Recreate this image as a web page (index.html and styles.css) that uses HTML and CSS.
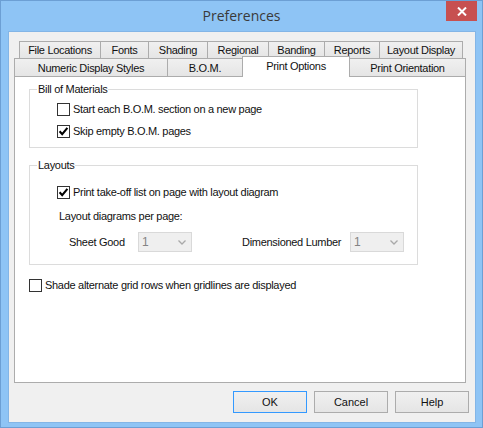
FILE: index.html
```html
<!DOCTYPE html>
<html>
<head>
<meta charset="utf-8">
<link rel="stylesheet" href="styles.css">
</head>
<body>
<div class="window">
  <div class="titlebar">
    <div class="title">Preferences</div>
    <div class="close">
      <svg width="10" height="9" viewBox="0 0 10 9"><path d="M1 0.5 L9 8.5 M9 0.5 L1 8.5" stroke="#fff" stroke-width="2" fill="none"/></svg>
    </div>
  </div>
  <div class="client">
    <div class="tabrow row1">
      <div class="tab w-files">File Locations</div>
      <div class="tab w-fonts">Fonts</div>
      <div class="tab w-shading">Shading</div>
      <div class="tab w-regional">Regional</div>
      <div class="tab w-banding">Banding</div>
      <div class="tab w-reports">Reports</div>
      <div class="tab w-layout">Layout Display</div>
    </div>
    <div class="tabrow row2">
      <div class="tab w-numeric">Numeric Display Styles</div>
      <div class="tab w-bom">B.O.M.</div>
      <div class="tab w-print selected">Print Options</div>
      <div class="tab w-orient">Print Orientation</div>
    </div>
    <div class="panel">
      <fieldset class="group group-bom">
        <legend>Bill of Materials</legend>
        <div class="group-body">
          <label class="check-row first-bom">
            <span class="box"></span>
            <span>Start each B.O.M. section on a new page</span>
          </label>
          <label class="check-row">
            <span class="box"><svg width="11" height="11" viewBox="0 0 11 11"><path d="M1.6 5.2 L4.2 8.2 L9.4 1.8" stroke="#000" stroke-width="2.1" fill="none"/></svg></span>
            <span>Skip empty B.O.M. pages</span>
          </label>
        </div>
      </fieldset>
      <fieldset class="group group-layouts">
        <legend>Layouts</legend>
        <div class="group-body">
          <label class="check-row">
            <span class="box"><svg width="11" height="11" viewBox="0 0 11 11"><path d="M1.6 5.2 L4.2 8.2 L9.4 1.8" stroke="#000" stroke-width="2.1" fill="none"/></svg></span>
            <span>Print take-off list on page with layout diagram</span>
          </label>
          <div class="per-page">Layout diagrams per page:</div>
          <div class="combo-row">
            <span class="lbl lbl-sheet">Sheet Good</span>
            <div class="combo"><span class="val">1</span><svg width="8" height="5" viewBox="0 0 8 5"><path d="M0.5 0.5 L4 4 L7.5 0.5" stroke="#a9a9a9" stroke-width="1.3" fill="none"/></svg></div>
            <span class="lbl lbl-lumber">Dimensioned Lumber</span>
            <div class="combo"><span class="val">1</span><svg width="8" height="5" viewBox="0 0 8 5"><path d="M0.5 0.5 L4 4 L7.5 0.5" stroke="#a9a9a9" stroke-width="1.3" fill="none"/></svg></div>
          </div>
        </div>
      </fieldset>
      <label class="check-row shade-row">
        <span class="box"></span>
        <span>Shade alternate grid rows when gridlines are displayed</span>
      </label>
    </div>
    <div class="buttons">
      <div class="btn default">OK</div>
      <div class="btn">Cancel</div>
      <div class="btn">Help</div>
    </div>
  </div>
</div>
</body>
</html>
```

FILE: styles.css
```css
html, body {
  margin: 0;
  padding: 0;
}
body {
  font-family: "Liberation Sans", Arial, sans-serif;
  font-size: 11px;
  letter-spacing: -0.3px;
  color: #111;
}
.window {
  box-sizing: border-box;
  width: 483px;
  height: 428px;
  background: #8ec4f5;
  border: 1px solid #6c9fd4;
  display: flex;
  flex-direction: column;
}
.titlebar {
  height: 30px;
  display: grid;
  grid-template-columns: 1fr auto 1fr;
}
.title {
  grid-column: 2;
  font-family: "Open Sans", "Noto Sans", sans-serif;
  font-size: 14px;
  letter-spacing: 0;
  color: #3a3a3a;
  line-height: 30px;
}
.close {
  grid-column: 3;
  justify-self: end;
  align-self: start;
  width: 31px;
  height: 20px;
  margin-right: 5px;
  background: #c75050;
  display: flex;
  align-items: center;
  justify-content: center;
}
.client {
  flex: 1;
  box-sizing: border-box;
  margin: 0 6px 4px 7px;
  background: #f0f0f0;
  border: 1px solid #83b5e6;
  padding: 9px 9px 9px 5px;
  display: flex;
  flex-direction: column;
}
.tabrow {
  display: flex;
  align-items: flex-start;
}
.row1 {
  margin-left: 5px;
}
.tab {
  box-sizing: border-box;
  border: 1px solid #acacac;
  border-bottom: none;
  margin-left: -1px;
  background: linear-gradient(#f0f0f0, #e5e5e5);
  display: flex;
  align-items: center;
  justify-content: center;
  white-space: nowrap;
}
.tab:first-child {
  margin-left: 0;
}
.row1 .tab {
  height: 17px;
}
.row2 .tab {
  height: 18px;
}
.row2 .tab.selected {
  height: 21px;
  margin-top: -2px;
  margin-bottom: -1px;
  padding-bottom: 2px;
  background: #fff;
  position: relative;
  z-index: 1;
}
.w-files { width: 82px; }
.w-fonts { width: 49px; }
.w-shading { width: 60px; }
.w-regional { width: 62px; }
.w-banding { width: 57px; }
.w-reports { width: 56px; }
.w-layout { width: 84px; }
.w-numeric { width: 154px; }
.w-bom { width: 76px; }
.w-print { width: 108px; }
.w-orient { width: 117px; }

.panel {
  flex: 1;
  background: #fff;
  border: 1px solid #acacac;
  padding: 6px 0 0 14px;
  display: flex;
  flex-direction: column;
  align-items: flex-start;
}
.group {
  box-sizing: border-box;
  width: 389px;
  margin: 0;
  border: 1px solid #dcdcdc;
  padding: 0 0 0 7px;
  min-width: 0;
}
.group legend {
  padding: 0 1px;
  line-height: 13px;
}
.group-bom {
  padding-bottom: 5px;
}
.group-layouts {
  margin-top: 11px;
  padding-bottom: 12px;
}
.group-body {
  padding-left: 20px;
  display: flex;
  flex-direction: column;
  align-items: flex-start;
}
.group-bom .group-body {
  padding-top: 2px;
}
.group-layouts .group-body {
  padding-top: 9px;
}
.check-row {
  height: 22px;
  display: flex;
  align-items: center;
  gap: 3px;
  white-space: nowrap;
}
.box {
  box-sizing: border-box;
  width: 13px;
  height: 13px;
  border: 1px solid #333;
  background: #fff;
  display: flex;
  align-items: center;
  justify-content: center;
  flex: none;
}
.per-page {
  height: 21px;
  line-height: 21px;
  margin-left: 2px;
  margin-top: 3px;
}
.combo-row {
  margin-top: 5px;
  display: flex;
  align-items: center;
}
.lbl {
  white-space: nowrap;
}
.lbl-sheet {
  margin-left: 12px;
  width: 69px;
}
.lbl-lumber {
  margin-left: 50px;
  width: 108px;
}
.combo {
  box-sizing: border-box;
  width: 54px;
  height: 20px;
  border: 1px solid #d9d9d9;
  background: #efefef;
  display: flex;
  align-items: center;
  justify-content: space-between;
  padding: 0 5px 0 3px;
  color: #838383;
}
.combo .val {
  font-size: 12px;
}
.shade-row {
  margin-top: 9px;
}
.buttons {
  margin-top: 8px;
  margin-right: -3px;
  display: flex;
  justify-content: flex-end;
  gap: 7px;
}
.btn {
  box-sizing: border-box;
  width: 74px;
  height: 22px;
  border: 1px solid #acacac;
  background: linear-gradient(#f0f0f0, #e5e5e5);
  display: flex;
  align-items: center;
  justify-content: center;
  letter-spacing: 0;
}
.btn.default {
  border-color: #3399ff;
}
```
